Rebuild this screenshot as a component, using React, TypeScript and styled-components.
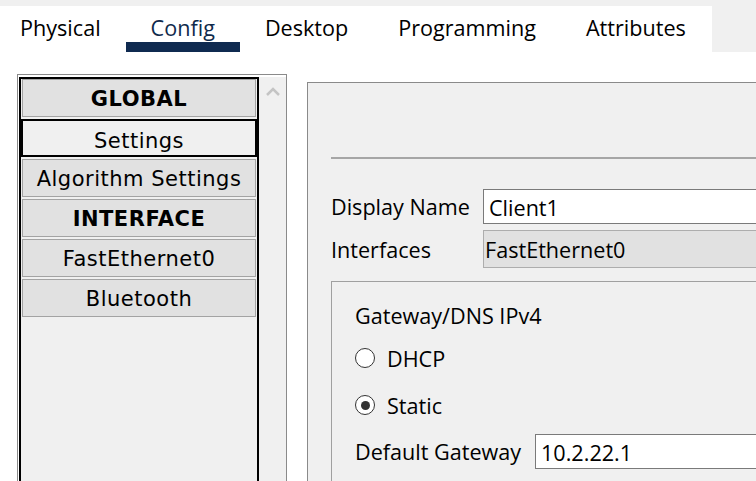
import styled, { createGlobalStyle } from "styled-components";

const GlobalStyle = createGlobalStyle`
  html, body {
    margin: 0;
    padding: 0;
    background: #f0f0f0;
  }
  * {
    box-sizing: border-box;
  }
`;

const UI_FONT = `"Open Sans", "Noto Sans", "Liberation Sans", sans-serif`;
const LIST_FONT = `"DejaVu Sans", Verdana, sans-serif`;
const UI_SIZE = "21.6px";

const Window = styled.div`
  width: 756px;
  height: 481px;
  overflow: hidden;
  padding-top: 6px;
  background: #f0f0f0;
  display: flex;
  flex-direction: column;
  font-family: ${UI_FONT};
  color: #000;
`;

const TabStrip = styled.div`
  display: flex;
  align-self: flex-start;
  background: #fff;
  height: 46px;
  padding-right: 1px;
`;

const Tab = styled.div<{ $active?: boolean }>`
  padding: 8px 25px 0;
  font-size: ${UI_SIZE};
  line-height: 28px;
  color: ${(p) => (p.$active ? "#102a4c" : "#000")};
  border-bottom: 10px solid ${(p) => (p.$active ? "#0f2a50" : "transparent")};
  white-space: nowrap;
  &:first-child {
    padding-left: 20px;
  }
`;

const Body = styled.div`
  flex: 1;
  display: flex;
  background: #fff;
  overflow: hidden;
`;

const SidePanel = styled.div`
  flex: none;
  margin: 22px 0 0 17px;
  width: 270px;
  border: 1px solid #8a8a8a;
  border-bottom: none;
  padding: 2px 0 0 1px;
  display: flex;
  background: #fff;
`;

const ItemList = styled.div`
  flex: none;
  width: 240px;
  border: 2px solid #000;
  border-bottom: none;
  padding: 0 1px;
  background: #f0f0f0;
  display: flex;
  flex-direction: column;
`;

const Item = styled.div<{ $heading?: boolean; $selected?: boolean }>`
  height: 38px;
  margin-bottom: 2px;
  display: flex;
  align-items: center;
  justify-content: center;
  padding-top: ${(p) => (p.$selected ? "5px" : "2px")};
  font-family: ${LIST_FONT};
  font-size: 21px;
  letter-spacing: 0.5px;
  font-weight: ${(p) => (p.$heading ? 700 : 400)};
  background: ${(p) => (p.$selected ? "#f0f0f0" : "#e1e1e1")};
  border: ${(p) => (p.$selected ? "2px solid #000" : "1px solid #a3a3a3")};
  margin-left: ${(p) => (p.$selected ? "-1px" : "0")};
  margin-right: ${(p) => (p.$selected ? "-1px" : "0")};
  white-space: nowrap;
`;

const ScrollTrack = styled.div`
  flex: 1;
  background: #f0f0f0;
  display: flex;
  justify-content: center;
  align-items: flex-start;
  padding-top: 10px;
`;

const MainPanel = styled.div`
  flex: 1;
  min-width: 0;
  margin: 30px 0 0 20px;
  border-left: 1px solid #8a8a8a;
  border-top: 1px solid #8a8a8a;
  background: #f0f0f0;
  padding-left: 23px;
  display: flex;
  flex-direction: column;
`;

const Separator = styled.div`
  margin-top: 74px;
  height: 2px;
  background: #a6a6a6;
`;

const FieldRow = styled.div<{ $gap: number; $height: number }>`
  margin-top: ${(p) => p.$gap}px;
  height: ${(p) => p.$height}px;
  display: flex;
  align-items: center;
`;

const Label = styled.div<{ $width: number }>`
  flex: none;
  width: ${(p) => p.$width}px;
  font-size: ${UI_SIZE};
  white-space: nowrap;
`;

const TextInput = styled.input`
  flex: 1;
  height: 100%;
  min-width: 0;
  border: 1px solid #7a7a7a;
  border-right: none;
  background: #fff;
  padding: 2px 0 0 5px;
  margin: 0;
  font-family: ${UI_FONT};
  font-size: ${UI_SIZE};
  color: #000;
  outline: none;
`;

const ReadOnlyField = styled.div`
  flex: 1;
  height: 100%;
  border: 1px solid #adadad;
  border-right: none;
  background: #e1e1e1;
  padding-left: 1px;
  display: flex;
  align-items: center;
  font-size: ${UI_SIZE};
  white-space: nowrap;
`;

const GroupBox = styled.div`
  flex: 1;
  margin-top: 13px;
  border-left: 1px solid #a0a0a0;
  border-top: 1px solid #a0a0a0;
  padding-left: 23px;
  display: flex;
  flex-direction: column;
`;

const GroupTitle = styled.div`
  margin-top: 20px;
  font-size: ${UI_SIZE};
  line-height: 28px;
`;

const RadioRow = styled.label<{ $gap: number }>`
  margin-top: ${(p) => p.$gap}px;
  height: 28px;
  display: flex;
  align-items: center;
  gap: 12px;
  font-size: ${UI_SIZE};
`;

const RadioCircle = styled.span<{ $checked?: boolean }>`
  flex: none;
  width: 20px;
  height: 20px;
  border-radius: 50%;
  border: 1px solid #333;
  background: #fff;
  display: flex;
  align-items: center;
  justify-content: center;
  &::after {
    content: "";
    width: 9px;
    height: 9px;
    border-radius: 50%;
    background: ${(p) => (p.$checked ? "#333" : "transparent")};
  }
`;

const tabs = ["Physical", "Config", "Desktop", "Programming", "Attributes"];

const items = [
  { label: "GLOBAL", heading: true },
  { label: "Settings", selected: true },
  { label: "Algorithm Settings" },
  { label: "INTERFACE", heading: true },
  { label: "FastEthernet0" },
  { label: "Bluetooth" },
];

export default function App() {
  return (
    <>
      <GlobalStyle />
      <Window>
        <TabStrip>
          {tabs.map((t) => (
            <Tab key={t} $active={t === "Config"}>
              {t}
            </Tab>
          ))}
        </TabStrip>
        <Body>
          <SidePanel>
            <ItemList>
              {items.map((it) => (
                <Item key={it.label} $heading={it.heading} $selected={it.selected}>
                  {it.label}
                </Item>
              ))}
            </ItemList>
            <ScrollTrack>
              <svg width="14" height="9" viewBox="0 0 14 9">
                <polyline
                  points="1,8 7,2 13,8"
                  fill="none"
                  stroke="#c4c4c4"
                  strokeWidth="2.5"
                />
              </svg>
            </ScrollTrack>
          </SidePanel>
          <MainPanel>
            <Separator />
            <FieldRow $gap={30} $height={35}>
              <Label $width={152}>Display Name</Label>
              <TextInput readOnly value="Client1" />
            </FieldRow>
            <FieldRow $gap={6} $height={38}>
              <Label $width={152}>Interfaces</Label>
              <ReadOnlyField>FastEthernet0</ReadOnlyField>
            </FieldRow>
            <GroupBox>
              <GroupTitle>Gateway/DNS IPv4</GroupTitle>
              <RadioRow $gap={14}>
                <RadioCircle />
                DHCP
              </RadioRow>
              <RadioRow $gap={19}>
                <RadioCircle $checked />
                Static
              </RadioRow>
              <FieldRow $gap={15} $height={35}>
                <Label $width={180}>Default Gateway</Label>
                <TextInput readOnly value="10.2.22.1" />
              </FieldRow>
            </GroupBox>
          </MainPanel>
        </Body>
      </Window>
    </>
  );
}
